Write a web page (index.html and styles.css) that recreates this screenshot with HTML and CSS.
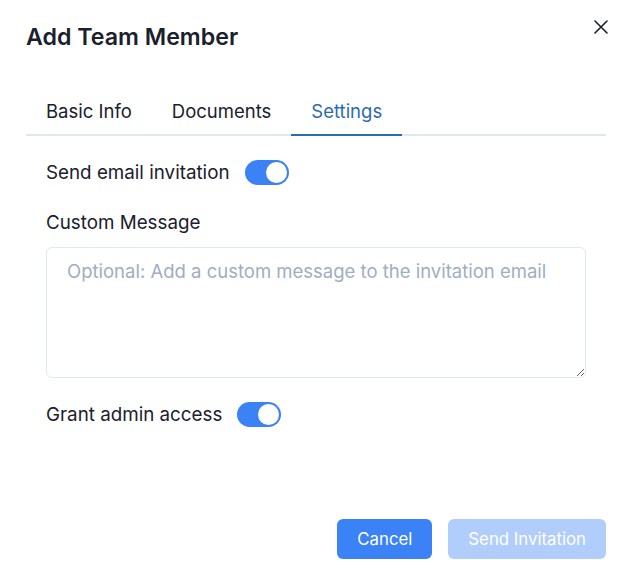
FILE: index.html
```html
<!DOCTYPE html>
<html lang="en">
<head>
<meta charset="utf-8">
<title>Add Team Member</title>
<link rel="stylesheet" href="styles.css">
</head>
<body>
<div class="modal">
  <header class="modal-header">
    <h2 class="modal-title">Add Team Member</h2>
    <button class="close-btn" aria-label="Close">
      <svg width="14" height="14" viewBox="0 0 14 14" aria-hidden="true">
        <path d="M1 1L13 13M13 1L1 13" stroke="#1a202c" stroke-width="1.6" stroke-linecap="round" fill="none"/>
      </svg>
    </button>
  </header>
  <div class="tabs">
    <div class="tablist">
      <button class="tab">Basic Info</button>
      <button class="tab">Documents</button>
      <button class="tab active">Settings</button>
    </div>
    <div class="panel">
      <div class="switch-row">
        <span class="label">Send email invitation</span>
        <span class="switch"><span class="thumb"></span></span>
      </div>
      <div class="field">
        <label class="label" for="msg">Custom Message</label>
        <textarea id="msg" class="textarea" placeholder="Optional: Add a custom message to the invitation email"></textarea>
      </div>
      <div class="switch-row">
        <span class="label">Grant admin access</span>
        <span class="switch"><span class="thumb"></span></span>
      </div>
    </div>
  </div>
  <footer class="modal-footer">
    <button class="btn btn-primary">Cancel</button>
    <button class="btn btn-disabled">Send Invitation</button>
  </footer>
</div>
</body>
</html>
```
FILE: styles.css
```css
* { box-sizing: border-box; }
html, body { margin: 0; padding: 0; background: #ffffff; }
body {
  font-family: Inter, "Noto Sans", "Liberation Sans", sans-serif;
  color: #1a202c;
  font-size: 18.5px;
  line-height: 1.5;
}
.modal {
  position: relative;
  width: 630px;
  height: 579px;
  display: flex;
  flex-direction: column;
  background: #fff;
}
.modal-header {
  padding: 21px 24px 0 26px;
}
.modal-title {
  margin: 0;
  font-size: 23.2px;
  line-height: 32px;
  font-weight: 600;
  color: #1a202c;
}
.close-btn {
  position: absolute;
  top: 9px;
  left: 583px;
  width: 36px;
  height: 36px;
  border: 0;
  background: transparent;
  padding: 0;
  display: flex;
  align-items: center;
  justify-content: center;
  cursor: pointer;
}
.tabs {
  margin: 35px 24px 0 26px;
}
.tablist {
  display: flex;
  border-bottom: 2px solid #e2e8f0;
}
.tab {
  font-family: inherit;
  font-size: 18.5px;
  line-height: 27px;
  font-weight: 400;
  color: #1a202c;
  background: transparent;
  border: 0;
  border-bottom: 2px solid transparent;
  margin-bottom: -2px;
  padding: 10px 20px 9px;
  cursor: pointer;
}
.tab.active {
  color: #2b6cb0;
  border-bottom-color: #2b6cb0;
}
.panel {
  padding: 24px 20px 0;
  display: flex;
  flex-direction: column;
  gap: 24px;
}
.switch-row {
  display: flex;
  align-items: center;
  gap: 15px;
  height: 25px;
}
.label {
  font-size: 18.8px;
  line-height: 27px;
  font-weight: 400;
  color: #1a202c;
}
.field {
  display: flex;
  flex-direction: column;
  gap: 11px;
}
.switch {
  width: 44px;
  height: 25px;
  border-radius: 13px;
  background: #3b82f6;
  padding: 2px;
  display: flex;
  justify-content: flex-end;
  align-items: center;
  flex-shrink: 0;
}
.thumb {
  width: 21px;
  height: 21px;
  border-radius: 50%;
  background: #fff;
}
.textarea {
  display: block;
  width: 100%;
  height: 131px;
  border: 1px solid #e2e8f0;
  border-radius: 6px;
  padding: 10px 20px;
  font-family: inherit;
  font-size: 18.5px;
  line-height: 27px;
  color: #1a202c;
  resize: vertical;
  outline: none;
}
.textarea::placeholder { color: #a0aec0; opacity: 1; }
.modal-footer {
  margin-top: auto;
  padding: 0 24px 20px;
  display: flex;
  justify-content: flex-end;
  gap: 16px;
}
.btn {
  height: 40px;
  padding: 0 20px;
  border: 0;
  border-radius: 6px;
  font-family: inherit;
  font-size: 16.8px;
  font-weight: 400;
  color: #fff;
  cursor: pointer;
}
.btn-primary { background: #3b82f6; }
.btn-disabled { background: #b1cdfb; cursor: not-allowed; }
```
